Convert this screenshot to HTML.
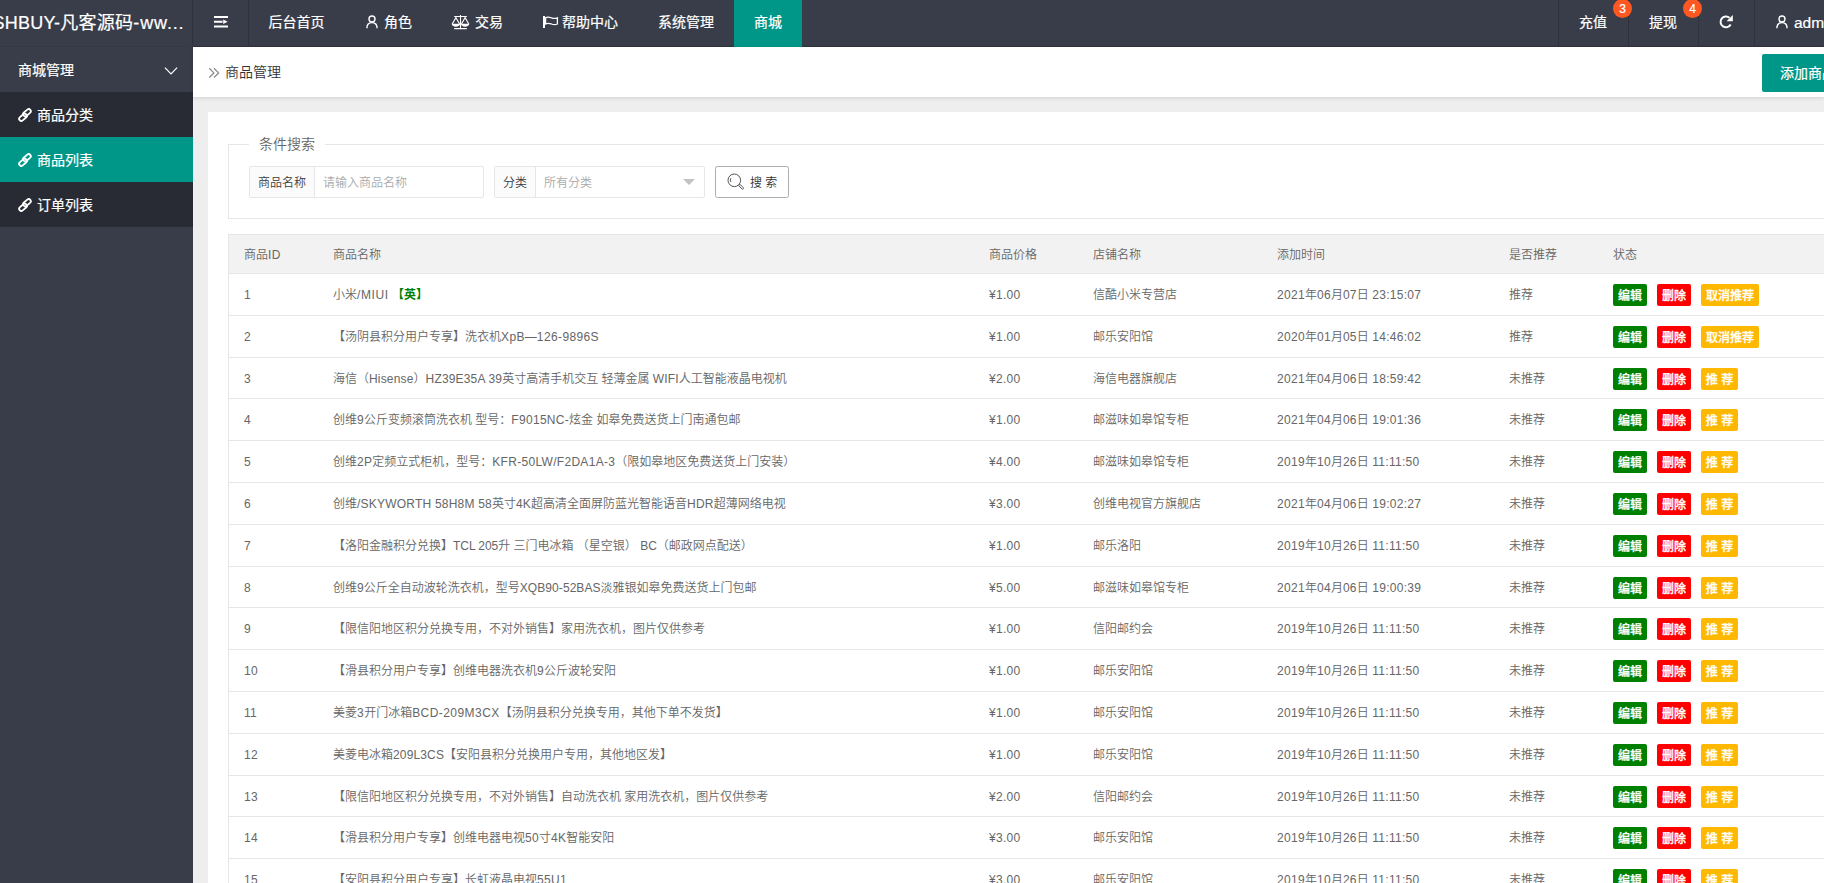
<!DOCTYPE html>
<html lang="zh-CN">
<head>
<meta charset="utf-8">
<title>商品管理</title>
<style>
*{margin:0;padding:0;box-sizing:border-box}
html,body{width:1824px;height:883px;overflow:hidden;background:#eee}
body{font-family:"Liberation Sans","Noto Sans CJK SC",sans-serif;font-size:14px;color:#333;position:relative}
svg{display:block;position:absolute;overflow:visible}
/* header */
#hdr{position:absolute;left:0;top:0;width:1824px;height:47px;background:#393D49;border-bottom:1px solid #2f323d;color:#fff;-webkit-text-stroke:.2px #fff}
#logo{position:absolute;left:0;top:0;z-index:1;width:193px;height:47px;border-bottom:1px solid #353945;border-right:1px solid #2f323d;overflow:hidden;white-space:nowrap;font-size:18px;line-height:46px}
#logo span{position:absolute;left:-7.500px;top:0;letter-spacing:.25px}
#logo i{font-style:normal;letter-spacing:.85px}
.vl{position:absolute;top:0;width:1px;height:46px;background:#2f323d}
.nv{position:absolute;top:0;height:46px;line-height:45px;font-size:14px;color:#fff;white-space:nowrap}
.nv.on{background:#009688;height:47px}
.bdg{position:absolute;z-index:2;top:-1px;width:19px;height:19px;border-radius:10px;background:#FF5722;color:#fff;font-size:12px;line-height:20px;text-align:center}
/* side */
#side{position:absolute;left:0;top:47px;width:193px;height:836px;background:#393D49;color:#fff;-webkit-text-stroke:.2px #fff}
.si{position:absolute;left:0;width:193px;height:45px;line-height:46px;font-size:14px;white-space:nowrap}
.si.sub{background:#282B33}
.si.on{background:#009688}
.si span{position:absolute;left:37px;top:0}
/* main */
#crumb{position:absolute;left:193px;top:47px;width:1631px;height:50px;background:#fff;box-shadow:0 1px 4px rgba(0,0,0,.12)}
#crumb .t{position:absolute;left:32px;top:0;line-height:51px;font-size:14px;color:#333;font-weight:350}
#add{position:absolute;left:1569px;top:7px;width:120px;height:38px;line-height:39px;background:#009688;color:#fff;-webkit-text-stroke:.2px #fff;border-radius:2px;padding-left:18px;font-size:14px;white-space:nowrap}
#card{position:absolute;left:208px;top:112px;width:1700px;height:800px;background:#fff}
#fs{position:absolute;left:20px;top:32px;width:1700px;height:75px;border:1px solid #e6e6e6}
#lg{position:absolute;left:20px;top:-11px;width:76px;height:20px;background:#fff;font-size:14px;line-height:20px;color:#666;text-align:center;font-weight:350}
.grp{position:absolute;top:21px;height:32px;border:1px solid #e6e6e6;border-radius:2px;background:#fff;font-size:12px;line-height:33px;font-weight:350}
.grp .lb{position:absolute;left:0;top:0;height:30px;background:#FBFBFB;border-right:1px solid #e6e6e6;color:#3c3c3c;text-align:center}
.grp .ph{position:absolute;top:0;color:#aaa;white-space:nowrap}
#sbtn{position:absolute;left:486px;top:21px;width:74px;height:32px;border:1px solid #adadad;border-radius:2.5px;background:#fff;font-size:12px;line-height:33px;color:#333;font-weight:350}
#sbtn span{position:absolute;left:34px;top:0;white-space:nowrap}
/* table */
.tbl{position:absolute;left:20px;top:122px;width:1700px;border:1px solid #e6e6e6;border-right:none;font-size:12px;color:#666;font-weight:350}
.tr{position:relative;height:41.8px;border-bottom:1px solid #e6e6e6;line-height:43.6px;white-space:nowrap}
.tr.th{height:39px;line-height:41px;background:#f2f2f2}
.tr span{position:absolute;top:0}
.c1{left:15px}.c2{left:104px}.c3{left:760px}.c4{left:864px}.c5{left:1048px}.c6{left:1280px}.c7{left:1384px}
.g{color:#008000;font-weight:bold}
.tr i{font-style:normal;letter-spacing:.3px}
.tr .c2 i{letter-spacing:var(--ls,.3px)}
.b{position:absolute;top:10px;height:22px;line-height:24px;font-weight:500;-webkit-text-stroke:.3px #fff;border-radius:2px;color:#fff;font-size:12px;text-align:center;width:34px}
.e{left:0;background:#008000}.d{left:44px;background:#FF0000}.w{left:88px;background:#FFB800}
.w4{width:58px}.w2{width:37px}
</style>
</head>
<body>
<div id="hdr">
<div id="logo"><span>SHBUY-凡客源码<i>-ww...</i></span></div>
<svg style="left:214px;top:16px" width="14" height="12" viewBox="0 0 14 12"><path fill="#fff" d="M0 0h14v2H0zM0 4.8h8.6v2H0zM0 9.6h14v2H0zM9.2 3.6l4.4 2.2-4.4 2.2z"/></svg>
<div class="vl" style="left:248px"></div>
<div class="nv" style="left:268.5px">后台首页</div>
<svg style="left:365px;top:15px" width="14" height="14" viewBox="0 0 14 14"><g fill="none" stroke="#fff" stroke-width="1.4"><circle cx="7" cy="4" r="3"/><path d="M1.900 13.300c0-3.500 2.100-5.700 5.100-5.700s5.100 2.200 5.100 5.700"/></g></svg>
<div class="nv" style="left:384px">角色</div>
<svg style="left:451px;top:15px" width="19" height="15" viewBox="0 0 19 15"><g fill="none" stroke="#fff" stroke-width="1.1"><path d="M3.2 1.5h12.6M9.5 0v13.6M3.2 13.6h12.6"/><path d="M1.2 9L4.9 2.6 8.6 9M10.4 9l3.7-6.4L17.8 9"/></g><path fill="#fff" d="M.7 8.8h8.4c0 1.7-1.9 2.9-4.2 2.9S.7 10.500.7 8.800zM9.900 8.800h8.400c0 1.700-1.900 2.900-4.200 2.900s-4.200-1.200-4.200-2.900z"/></svg>
<div class="nv" style="left:475px">交易</div>
<svg style="left:543px;top:16px" width="16" height="12" viewBox="0 0 16 12"><path fill="#fff" d="M0 0h2v12H0z"/><path fill="none" stroke="#fff" stroke-width="1.3" d="M2.600 1.700c2.200-1.200 3.800-.600 5.800.100s3.700.900 6 0v6.200c-2.300.900-4 .700-6 0s-3.600-1.300-5.800-.100z"/></svg>
<div class="nv" style="left:562px">帮助中心</div>
<div class="nv" style="left:658px">系统管理</div>
<div class="nv on" style="left:734px;width:68px;padding-left:20px">商城</div>
<div class="vl" style="left:1558px"></div>
<div class="nv" style="left:1579px">充值</div>
<div class="bdg" style="left:1613px">3</div>
<div class="vl" style="left:1628px"></div>
<div class="nv" style="left:1649px">提现</div>
<div class="bdg" style="left:1683px">4</div>
<div class="vl" style="left:1698px"></div>
<svg style="left:1719px;top:15px" width="14" height="14" viewBox="0 0 14 14"><path fill="none" stroke="#fff" stroke-width="2" d="M11.700 9.500A5.400 5.400 0 1 1 10.500 2.800"/><path fill="#fff" d="M13.800 0v6.200H7.600z"/></svg>
<div class="vl" style="left:1754px"></div>
<svg style="left:1775px;top:15px" width="14" height="14" viewBox="0 0 14 14"><g fill="none" stroke="#fff" stroke-width="1.4"><circle cx="7" cy="4" r="3"/><path d="M1.900 13.300c0-3.500 2.100-5.700 5.100-5.700s5.100 2.200 5.100 5.700"/></g></svg>
<div class="nv" style="left:1794px;font-size:15.500px">admin</div>
</div>
<div id="side">
<div class="si" style="top:0"><span style="left:18px">商城管理</span><svg style="left:164px;top:20px" width="14" height="8" viewBox="0 0 14 8"><path fill="none" stroke="#fff" stroke-width="1.200" d="M.9.600L7 6.900l6.100-6.300"/></svg></div>
<div class="si sub" style="top:45px"><svg class="lk" style="left:17px;top:14.600px" width="16" height="16" viewBox="0 0 16 16"><g fill="none" stroke="#fff" stroke-width="1.8" transform="rotate(-40 8 8)"><rect x=".65" y="6.350" width="8.700" height="4.300" rx="2.150"/><rect x="6.650" y="5.350" width="8.700" height="4.300" rx="2.150"/></g></svg><span>商品分类</span></div>
<div class="si sub on" style="top:90px"><svg class="lk" style="left:17px;top:14.600px" width="16" height="16" viewBox="0 0 16 16"><g fill="none" stroke="#fff" stroke-width="1.8" transform="rotate(-40 8 8)"><rect x=".65" y="6.350" width="8.700" height="4.300" rx="2.150"/><rect x="6.650" y="5.350" width="8.700" height="4.300" rx="2.150"/></g></svg><span>商品列表</span></div>
<div class="si sub" style="top:135px"><svg class="lk" style="left:17px;top:14.600px" width="16" height="16" viewBox="0 0 16 16"><g fill="none" stroke="#fff" stroke-width="1.8" transform="rotate(-40 8 8)"><rect x=".65" y="6.350" width="8.700" height="4.300" rx="2.150"/><rect x="6.650" y="5.350" width="8.700" height="4.300" rx="2.150"/></g></svg><span>订单列表</span></div>
</div>
<div id="crumb">
<svg style="left:16px;top:21px" width="10" height="10" viewBox="0 0 10 10"><path fill="none" stroke="#8a8a8a" stroke-width="1.25" d="M.3.300L4.900 4.900.3 9.500M5 .3l4.600 4.600L5 9.500"/></svg>
<div class="t">商品管理</div>
<div id="add">添加商品</div>
</div>
<div id="card">
<div id="fs">
<div id="lg">条件搜索</div>
<div class="grp" style="left:20px;width:235px"><div class="lb" style="width:65px">商品名称</div><div class="ph" style="left:73px">请输入商品名称</div></div>
<div class="grp" style="left:265px;width:211px"><div class="lb" style="width:41px">分类</div><div class="ph" style="left:49px">所有分类</div><svg style="left:188px;top:12px" width="12" height="6" viewBox="0 0 12 6"><path fill="#c2c2c2" d="M0 0h12L6 6z"/></svg></div>
<div id="sbtn"><svg style="left:10.500px;top:6.300px" width="18" height="18" viewBox="0 0 18 18"><g fill="none" stroke="#555" stroke-width="1"><circle cx="7.300" cy="7.300" r="6.300"/><path d="M3.900 5.200a4 4 0 0 0 0 4"/><path d="M11.700 12.600l1.300-1.300 3.200 3.300a.9.900 0 0 1-1.300 1.300z"/></g></svg><span>搜 索</span></div>
</div>

<div class="tbl">
<div class="tr th"><span class="c1">商品<i>ID</i></span><span class="c2">商品名称</span><span class="c3">商品价格</span><span class="c4">店铺名称</span><span class="c5">添加时间</span><span class="c6">是否推荐</span><span class="c7">状态</span></div>
<div class="tr" style="--ls:0.6px"><span class="c1"><i>1</i></span><span class="c2">小米<i>/MIUI</i> <b class="g">【英】</b></span><span class="c3"><i>¥1.00</i></span><span class="c4">信酷小米专营店</span><span class="c5"><i>2021</i>年<i>06</i>月<i>07</i>日 <i>23:15:07</i></span><span class="c6">推荐</span><span class="c7"><a class="b e">编辑</a><a class="b d">删除</a><a class="b w w4">取消推荐</a></span></div>
<div class="tr" style="--ls:0.38px"><span class="c1"><i>2</i></span><span class="c2">【汤阴县积分用户专享】洗衣机<i>XpB</i>—<i>126-9896S</i></span><span class="c3"><i>¥1.00</i></span><span class="c4">邮乐安阳馆</span><span class="c5"><i>2020</i>年<i>01</i>月<i>05</i>日 <i>14:46:02</i></span><span class="c6">推荐</span><span class="c7"><a class="b e">编辑</a><a class="b d">删除</a><a class="b w w4">取消推荐</a></span></div>
<div class="tr" style="--ls:0.17px"><span class="c1"><i>3</i></span><span class="c2">海信（<i>Hisense</i>）<i>HZ39E35A 39</i>英寸高清手机交互 轻薄金属 <i>WIFI</i>人工智能液晶电视机</span><span class="c3"><i>¥2.00</i></span><span class="c4">海信电器旗舰店</span><span class="c5"><i>2021</i>年<i>04</i>月<i>06</i>日 <i>18:59:42</i></span><span class="c6">未推荐</span><span class="c7"><a class="b e">编辑</a><a class="b d">删除</a><a class="b w w2">推 荐</a></span></div>
<div class="tr"><span class="c1"><i>4</i></span><span class="c2">创维<i>9</i>公斤变频滚筒洗衣机 型号：<i>F9015NC-</i>炫金 如皋免费送货上门南通包邮</span><span class="c3"><i>¥1.00</i></span><span class="c4">邮滋味如皋馆专柜</span><span class="c5"><i>2021</i>年<i>04</i>月<i>06</i>日 <i>19:01:36</i></span><span class="c6">未推荐</span><span class="c7"><a class="b e">编辑</a><a class="b d">删除</a><a class="b w w2">推 荐</a></span></div>
<div class="tr"><span class="c1"><i>5</i></span><span class="c2">创维<i>2P</i>定频立式柜机，型号：<i>KFR-50LW/F2DA1A-3</i>（限如皋地区免费送货上门安装）</span><span class="c3"><i>¥4.00</i></span><span class="c4">邮滋味如皋馆专柜</span><span class="c5"><i>2019</i>年<i>10</i>月<i>26</i>日 <i>11:11:50</i></span><span class="c6">未推荐</span><span class="c7"><a class="b e">编辑</a><a class="b d">删除</a><a class="b w w2">推 荐</a></span></div>
<div class="tr" style="--ls:0.21px"><span class="c1"><i>6</i></span><span class="c2">创维<i>/SKYWORTH 58H8M 58</i>英寸<i>4K</i>超高清全面屏防蓝光智能语音<i>HDR</i>超薄网络电视</span><span class="c3"><i>¥3.00</i></span><span class="c4">创维电视官方旗舰店</span><span class="c5"><i>2021</i>年<i>04</i>月<i>06</i>日 <i>19:02:27</i></span><span class="c6">未推荐</span><span class="c7"><a class="b e">编辑</a><a class="b d">删除</a><a class="b w w2">推 荐</a></span></div>
<div class="tr" style="--ls:-0.06px"><span class="c1"><i>7</i></span><span class="c2">【洛阳金融积分兑换】<i>TCL 205</i>升 三门电冰箱 （星空银） <i>BC</i>（邮政网点配送）</span><span class="c3"><i>¥1.00</i></span><span class="c4">邮乐洛阳</span><span class="c5"><i>2019</i>年<i>10</i>月<i>26</i>日 <i>11:11:50</i></span><span class="c6">未推荐</span><span class="c7"><a class="b e">编辑</a><a class="b d">删除</a><a class="b w w2">推 荐</a></span></div>
<div class="tr" style="--ls:0.07px"><span class="c1"><i>8</i></span><span class="c2">创维<i>9</i>公斤全自动波轮洗衣机，型号<i>XQB90-52BAS</i>淡雅银如皋免费送货上门包邮</span><span class="c3"><i>¥5.00</i></span><span class="c4">邮滋味如皋馆专柜</span><span class="c5"><i>2021</i>年<i>04</i>月<i>06</i>日 <i>19:00:39</i></span><span class="c6">未推荐</span><span class="c7"><a class="b e">编辑</a><a class="b d">删除</a><a class="b w w2">推 荐</a></span></div>
<div class="tr"><span class="c1"><i>9</i></span><span class="c2">【限信阳地区积分兑换专用，不对外销售】家用洗衣机，图片仅供参考</span><span class="c3"><i>¥1.00</i></span><span class="c4">信阳邮约会</span><span class="c5"><i>2019</i>年<i>10</i>月<i>26</i>日 <i>11:11:50</i></span><span class="c6">未推荐</span><span class="c7"><a class="b e">编辑</a><a class="b d">删除</a><a class="b w w2">推 荐</a></span></div>
<div class="tr"><span class="c1"><i>10</i></span><span class="c2">【滑县积分用户专享】创维电器洗衣机<i>9</i>公斤波轮安阳</span><span class="c3"><i>¥1.00</i></span><span class="c4">邮乐安阳馆</span><span class="c5"><i>2019</i>年<i>10</i>月<i>26</i>日 <i>11:11:50</i></span><span class="c6">未推荐</span><span class="c7"><a class="b e">编辑</a><a class="b d">删除</a><a class="b w w2">推 荐</a></span></div>
<div class="tr" style="--ls:0.44px"><span class="c1"><i>11</i></span><span class="c2">美菱<i>3</i>开门冰箱<i>BCD-209M3CX</i>【汤阴县积分兑换专用，其他下单不发货】</span><span class="c3"><i>¥1.00</i></span><span class="c4">邮乐安阳馆</span><span class="c5"><i>2019</i>年<i>10</i>月<i>26</i>日 <i>11:11:50</i></span><span class="c6">未推荐</span><span class="c7"><a class="b e">编辑</a><a class="b d">删除</a><a class="b w w2">推 荐</a></span></div>
<div class="tr" style="--ls:0.14px"><span class="c1"><i>12</i></span><span class="c2">美菱电冰箱<i>209L3CS</i>【安阳县积分兑换用户专用，其他地区发】</span><span class="c3"><i>¥1.00</i></span><span class="c4">邮乐安阳馆</span><span class="c5"><i>2019</i>年<i>10</i>月<i>26</i>日 <i>11:11:50</i></span><span class="c6">未推荐</span><span class="c7"><a class="b e">编辑</a><a class="b d">删除</a><a class="b w w2">推 荐</a></span></div>
<div class="tr"><span class="c1"><i>13</i></span><span class="c2">【限信阳地区积分兑换专用，不对外销售】自动洗衣机 家用洗衣机，图片仅供参考</span><span class="c3"><i>¥2.00</i></span><span class="c4">信阳邮约会</span><span class="c5"><i>2019</i>年<i>10</i>月<i>26</i>日 <i>11:11:50</i></span><span class="c6">未推荐</span><span class="c7"><a class="b e">编辑</a><a class="b d">删除</a><a class="b w w2">推 荐</a></span></div>
<div class="tr"><span class="c1"><i>14</i></span><span class="c2">【滑县积分用户专享】创维电器电视<i>50</i>寸<i>4K</i>智能安阳</span><span class="c3"><i>¥3.00</i></span><span class="c4">邮乐安阳馆</span><span class="c5"><i>2019</i>年<i>10</i>月<i>26</i>日 <i>11:11:50</i></span><span class="c6">未推荐</span><span class="c7"><a class="b e">编辑</a><a class="b d">删除</a><a class="b w w2">推 荐</a></span></div>
<div class="tr"><span class="c1"><i>15</i></span><span class="c2">【安阳县积分用户专享】长虹液晶电视<i>55U1</i></span><span class="c3"><i>¥3.00</i></span><span class="c4">邮乐安阳馆</span><span class="c5"><i>2019</i>年<i>10</i>月<i>26</i>日 <i>11:11:50</i></span><span class="c6">未推荐</span><span class="c7"><a class="b e">编辑</a><a class="b d">删除</a><a class="b w w2">推 荐</a></span></div>
</div>
</div>
</body>
</html>
